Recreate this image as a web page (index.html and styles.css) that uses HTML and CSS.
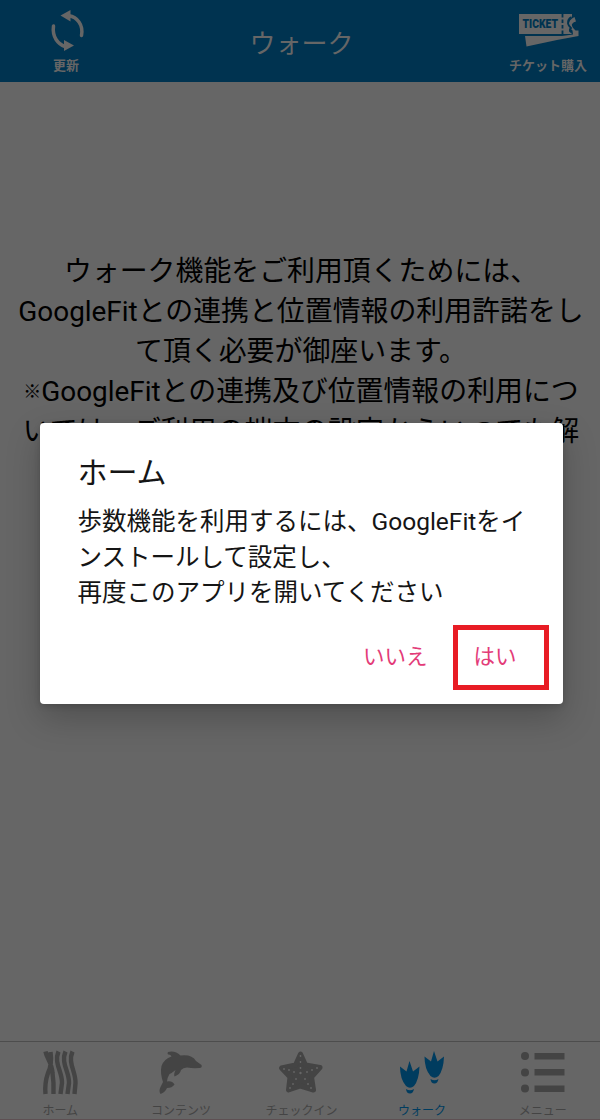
FILE: index.html
```html
<!DOCTYPE html>
<html lang="ja">
<head>
<meta charset="utf-8">
<title>ウォーク</title>
<link rel="stylesheet" href="styles.css">
</head>
<body>
<div class="app">
  <header class="header">
    <div class="action refresh">
      <svg class="refresh-icon" viewBox="0 0 36 42" width="36" height="42">
        <path d="M19 5.800C27 7 33.500 14.500 31.500 25.500" fill="none" stroke="currentColor" stroke-width="3.500" stroke-linecap="round"/>
        <path d="M10.500 5.500L20.500 0v11.500z" fill="currentColor"/>
        <path d="M3.500 16C2 27 8 34 15 36.500" fill="none" stroke="currentColor" stroke-width="3.500" stroke-linecap="round"/>
        <path d="M24 35.500L14 30v11z" fill="currentColor"/>
      </svg>
      <span>更新</span>
    </div>
    <h1 class="heading">ウォーク</h1>
    <div class="action ticket">
      <svg class="ticket-icon" viewBox="0 0 60 34" width="60" height="34">
        <path d="M0 0H53V3.500Q48.500 5 49 9.500Q49.500 12 52.500 13Q49 15 50.500 18L52.500 19V20H0z" fill="currentColor"/>
        <path d="M53 4.500L55.500 3L57 7.500Q52 9 53 12Q54 14.500 56.500 16.500H59.500V22L38 26L7.500 32.500L6 22H43L54 20.500L53.500 16.500Q49 13 50 9Q50.500 6 53 4.500z" fill="currentColor"/>
        <path d="M52.500 3Q48.500 5 49 9.500Q49.500 12 52 14Q50 16 52 18" fill="none" stroke="#003350" stroke-width="1.800"/>
        <path d="M43.500 0v20" stroke="#003350" stroke-width="1.800" stroke-dasharray="3.500 2"/>
        <text x="3.500" y="14.200" class="ticket-word" textLength="35.500" lengthAdjust="spacingAndGlyphs">TICKET</text>
      </svg>
      <span>チケット購入</span>
    </div>
  </header>
  <main class="content">
    <p class="notice">ウォーク機能をご利用頂くためには、<br>GoogleFitとの連携と位置情報の利用許諾をし<br>て頂く必要が御座います。<br><span class="mark">※</span>GoogleFitとの連携及び位置情報の利用につ<br>いては、ご利用の端末の設定からいつでも解</p>
  </main>
  <nav class="tabs">
    <div class="tab">
      <svg viewBox="0 0 44 44" width="44" height="44" fill="none" stroke="currentColor" stroke-width="4.400">
        <path d="M7.500 .5C9 8 14 12 14.500 22Q16 32 15.500 43M12.500 1C13.500 8 13 16 10 22Q6.500 32 7.500 43M20.500 .5C15.500 12 24.500 21 24 32L22.500 43M27.500 .5C22.500 12 31.500 21 31 32L29.500 43M34.500 .5C29.500 12 38 21 37.500 32L36.500 43"/>
      </svg>
      <span>ホーム</span>
    </div>
    <div class="tab">
      <svg viewBox="0 0 44 44" width="44" height="44" fill="currentColor">
        <path d="M9 1Q16-1 21.500 4.500Q33 3 37 10L42.500 14Q43.500 17 40.500 17Q34 17.500 28 16.500Q24 16.500 22 19Q21 23.500 15.500 25.500Q14.500 23 16.500 19Q13 22 10.500 23Q8 27 8 30.500Q13 29.500 15.500 33.500Q13 37 8 37Q6 41.500 1.500 43Q-.5 40 1.500 36L4 31Q1 22 2.500 15Q5 8 12.500 5.500Q11.500 3 9 3.500Q8 2 9 1z"/>
      </svg>
      <span>コンテンツ</span>
    </div>
    <div class="tab">
      <svg viewBox="0 0 44 44" width="44" height="44">
        <path d="M21.500 3L26.500 14L41 16.500L32.500 26L34.500 39L21.500 35L9.500 39L11 26L2.500 17L16.500 14z" fill="currentColor" stroke="currentColor" stroke-width="5" stroke-linejoin="round"/>
        <g fill="#666"><circle cx="21.500" cy="5" r=".9"/><circle cx="21.500" cy="11" r=".9"/><circle cx="21.500" cy="17" r=".9"/><circle cx="21.500" cy="22" r="1.200"/><circle cx="5" cy="18" r=".9"/><circle cx="10" cy="19" r=".9"/><circle cx="15" cy="21" r=".9"/><circle cx="38" cy="17" r=".9"/><circle cx="33" cy="19" r=".9"/><circle cx="28" cy="21" r=".9"/><circle cx="17" cy="28" r=".9"/><circle cx="14" cy="33" r=".9"/><circle cx="11" cy="37" r=".9"/><circle cx="26" cy="28" r=".9"/><circle cx="29" cy="33" r=".9"/><circle cx="32" cy="37" r=".9"/></g>
      </svg>
      <span>チェックイン</span>
    </div>
    <div class="tab current">
      <svg viewBox="0 0 44 44" width="44" height="44" fill="currentColor">
        <g id="foot"><path d="M9.500 10L13 20.500L19.500 15.500Q19 29 14 35Q10 38.500 6 35Q0 28 0 15.500L6.500 20.500z"/><path d="M6 38Q10 40.500 14 38Q13 42.500 10 42.500Q6.500 42.500 6 38z"/></g>
        <use href="#foot" x="24.500" y="-10"/>
      </svg>
      <span>ウォーク</span>
    </div>
    <div class="tab">
      <svg viewBox="0 0 44 44" width="44" height="44" fill="currentColor">
        <circle cx="4" cy="5" r="4"/><circle cx="4" cy="21.500" r="4"/><circle cx="4" cy="37.500" r="4"/>
        <path d="M13.500 2h30v6.500h-30zM13.500 18h30v6.500h-30zM13.500 34.500h30v6.500h-30z"/>
      </svg>
      <span>メニュー</span>
    </div>
  </nav>
  <section class="dialog">
    <h2 class="title">ホーム</h2>
    <p class="message">歩数機能を利用するには、GoogleFitをイ<br>ンストールして設定し、<br>再度このアプリを開いてください</p>
    <div class="buttons">
      <button class="button">いいえ</button>
      <button class="button highlighted">はい</button>
    </div>
  </section>
</div>
</body>
</html>
```
FILE: styles.css
```css
* { box-sizing: border-box; }
body {
  margin: 0;
  font-family: Roboto, "Noto Sans CJK JP", sans-serif;
}
.app {
  position: relative;
  display: flex;
  flex-direction: column;
  width: 600px;
  height: 1120px;
  overflow: hidden;
  background: #666;
}
.header {
  display: grid;
  grid-template-columns: 132px 1fr 104px;
  height: 82px;
  background: #003350;
  color: #666;
}
.action {
  display: flex;
  flex-direction: column;
  align-items: center;
  font-size: 13px;
  line-height: 18px;
  font-weight: 700;
  white-space: nowrap;
}
.refresh { padding: 10px 0 0; }
.refresh-icon { margin: 0 0 5px 4px; }
.ticket { padding-top: 14px; }
.ticket-icon { margin: 0 0 9px 2px; }
.ticket-word {
  fill: #003350;
  font: 900 13px Roboto, sans-serif;
}
.heading {
  margin: 0;
  padding: 5px 25px 0 0;
  text-align: center;
  font-size: 26px;
  line-height: 78px;
  font-weight: 400;
}
.content {
  flex: 1;
  padding: 170px 0 0 2px;
}
.notice {
  margin: 0;
  text-align: center;
  white-space: nowrap;
  font-size: 27.9px;
  line-height: 40px;
  color: #000;
}
.mark {
  display: inline-block;
  width: 18px;
  font-size: 18px;
  line-height: 20px;
  vertical-align: 3px;
}
.tabs {
  display: grid;
  grid-template-columns: repeat(5, 1fr);
  height: 79px;
  margin-right: -3px;
  border-top: 1px solid #4d4d4d;
  border-bottom: 1px solid #5e5053;
}
.tab {
  display: flex;
  flex-direction: column;
  align-items: center;
  padding-top: 9px;
  color: #444;
  font-size: 12px;
  line-height: 16px;
}
.tab svg {
  margin-bottom: 8px;
  overflow: visible;
}
.current { color: #003c5f; }
.dialog {
  position: absolute;
  left: 40px;
  top: 423px;
  width: 522.5px;
  height: 281px;
  padding: 28px 14px 0 37.5px;
  border-radius: 4px;
  background: #fff;
  color: #151515;
  box-shadow: 0 14px 34px rgba(0, 0, 0, .22), 0 2px 6px rgba(0, 0, 0, .15);
}
.title {
  margin: 0;
  font-size: 30px;
  line-height: 44px;
  font-weight: 400;
}
.message {
  margin: 9px 0 0;
  white-space: nowrap;
  font-size: 24.5px;
  line-height: 35.5px;
}
.buttons {
  display: flex;
  justify-content: flex-end;
  gap: 25px;
  margin-top: 14px;
}
.button {
  height: 65px;
  padding: 0;
  border: 0;
  background: none;
  color: #e33b78;
  font: 400 21.5px/30px Roboto, "Noto Sans CJK JP", sans-serif;
}
.highlighted {
  width: 96px;
  padding-right: 11px;
  border: 5px solid #e81c24;
}
```
